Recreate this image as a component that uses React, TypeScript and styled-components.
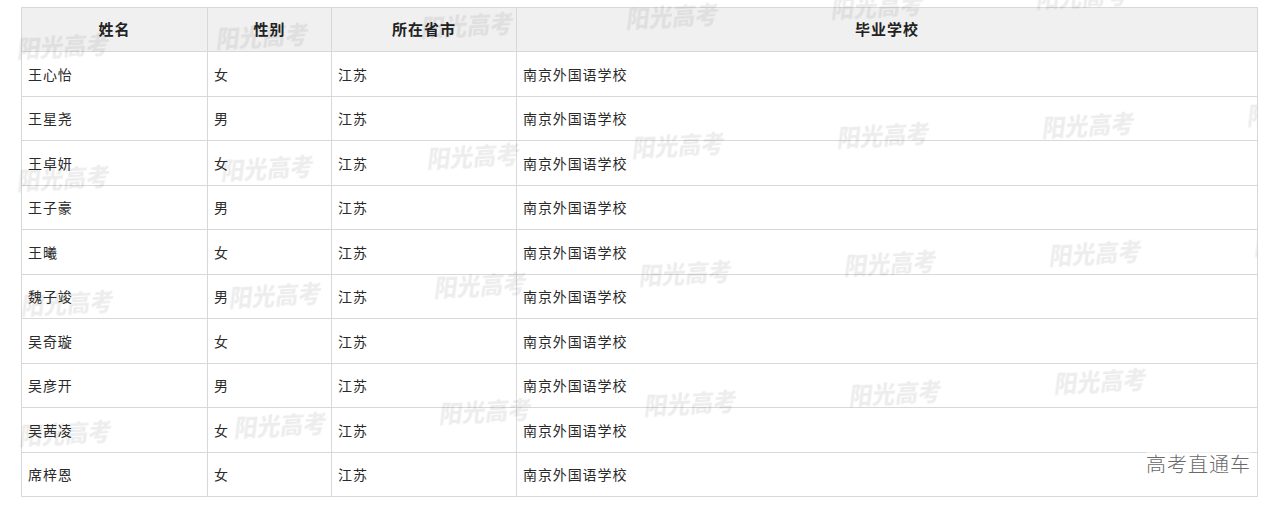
import styled, { createGlobalStyle } from 'styled-components';

const GlobalStyle = createGlobalStyle`
  html, body {
    margin: 0;
    padding: 0;
    background: #ffffff;
  }
  body {
    font-family: "Noto Sans CJK SC", "DejaVu Sans", sans-serif;
  }
`;

const Page = styled.div`
  position: relative;
  width: 1280px;
  height: 506px;
  padding: 7px 0 0 21px;
  box-sizing: border-box;
  overflow: hidden;
`;

const Table = styled.table`
  width: 1236px;
  border-collapse: collapse;
  table-layout: fixed;
  border: 1px solid #d2d2d2;
`;

const HeadCell = styled.th<{ $width: number }>`
  width: ${({ $width }) => $width}px;
  height: 44px;
  padding: 0 0 2px;
  background: #f0f0f0;
  border: 1px solid #d8d8d8;
  color: #222;
  font-size: 15px;
  font-weight: 700;
  letter-spacing: 1px;
  text-align: center;
  box-sizing: border-box;
`;

const Cell = styled.td`
  height: 44.5px;
  padding: 0 0 0 6px;
  border: 1px solid #d8d8d8;
  color: #2a2a2a;
  font-size: 14px;
  letter-spacing: 0.9px;
  text-align: left;
  box-sizing: border-box;
  white-space: nowrap;
`;

const WatermarkLayer = styled.div`
  position: absolute;
  left: 0;
  top: 0;
  width: 1257px;
  height: 506px;
  overflow: hidden;
  pointer-events: none;
`;

const Watermark = styled.span`
  position: absolute;
  font-family: "Noto Sans CJK SC", sans-serif;
  font-size: 23px;
  font-weight: 900;
  line-height: 26px;
  color: rgba(0, 0, 0, 0.07);
  white-space: nowrap;
  transform: rotate(-3deg) skewX(-10deg);
  transform-origin: left center;
  filter: blur(0.7px);
`;

const Corner = styled.div`
  position: absolute;
  right: 29px;
  bottom: 28px;
  font-family: "Noto Sans CJK SC", sans-serif;
  font-size: 20px;
  font-weight: 300;
  letter-spacing: 1px;
  color: #6a6a6a;
  background: rgba(255, 255, 255, 0.6);
`;

const students = [
  { name: '王心怡', sex: '女' },
  { name: '王星尧', sex: '男' },
  { name: '王卓妍', sex: '女' },
  { name: '王子豪', sex: '男' },
  { name: '王曦', sex: '女' },
  { name: '魏子竣', sex: '男' },
  { name: '吴奇璇', sex: '女' },
  { name: '吴彦开', sex: '男' },
  { name: '吴茜凌', sex: '女' },
  { name: '席梓恩', sex: '女' },
];

const columns = [
  { title: '姓名', width: 186 },
  { title: '性别', width: 124 },
  { title: '所在省市', width: 185 },
  { title: '毕业学校', width: 741 },
];

// left x, vertical centre of each "阳光高考" mark
const marks: [number, number][] = [
  [18, 48], [217, 38], [422, 27], [627, 18], [832, 8], [1037, -2],
  [18, 180], [222, 170], [428, 158], [633, 147], [838, 137], [1043, 127], [1248, 115],
  [22, 305], [230, 297], [435, 287], [640, 275], [845, 265], [1050, 255], [1255, 245],
  [20, 435], [235, 427], [440, 413], [645, 405], [850, 395], [1055, 383], [1260, 373],
];

export default function App() {
  return (
    <>
      <GlobalStyle />
      <Page>
        <Table>
          <thead>
            <tr>
              {columns.map((c) => (
                <HeadCell key={c.title} $width={c.width}>
                  {c.title}
                </HeadCell>
              ))}
            </tr>
          </thead>
          <tbody>
            {students.map((s) => (
              <tr key={s.name}>
                <Cell>{s.name}</Cell>
                <Cell>{s.sex}</Cell>
                <Cell>江苏</Cell>
                <Cell>南京外国语学校</Cell>
              </tr>
            ))}
          </tbody>
        </Table>
        <WatermarkLayer>
          {marks.map(([x, y], i) => (
            <Watermark key={i} style={{ left: x, top: y - 13 }}>
              阳光高考
            </Watermark>
          ))}
        </WatermarkLayer>
        <Corner>高考直通车</Corner>
      </Page>
    </>
  );
}
